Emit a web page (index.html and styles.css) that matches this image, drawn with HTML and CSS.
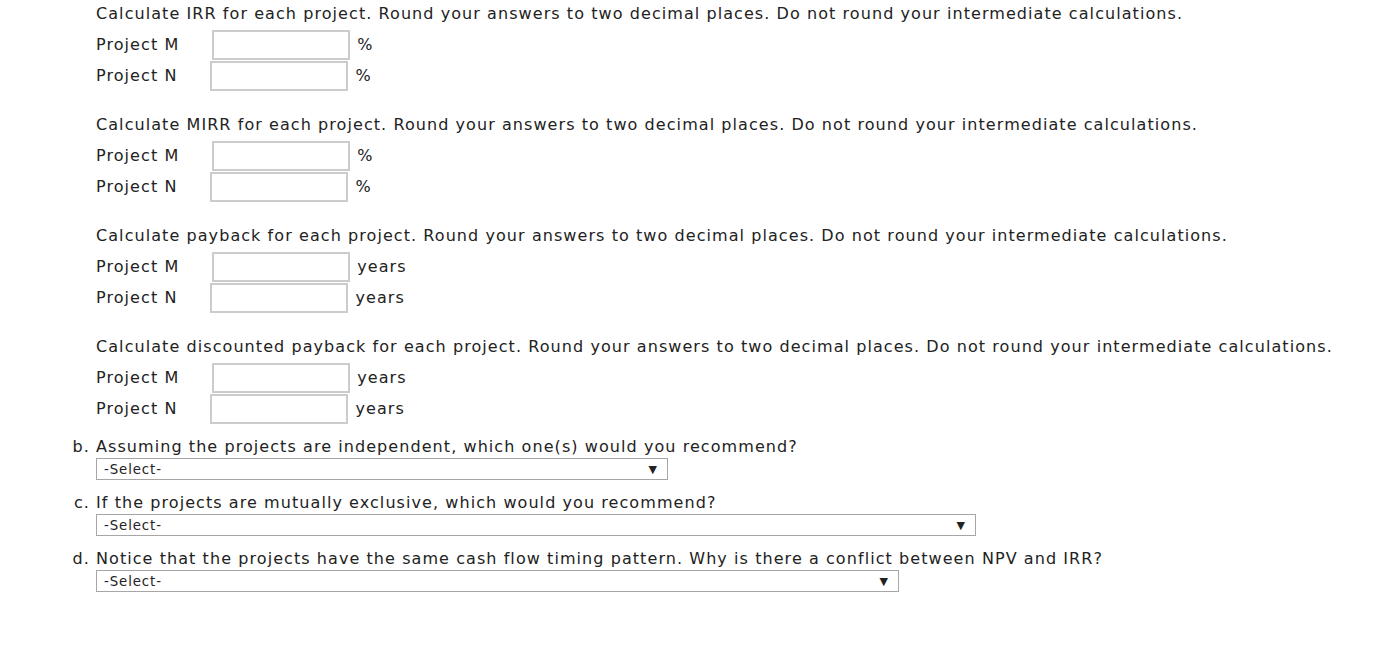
FILE: index.html
```html
<!DOCTYPE html>
<html>
<head>
<meta charset="utf-8">
<link rel="stylesheet" href="styles.css">
</head>
<body>
<div class="page">
  <div class="part">
    <div class="prompt">Calculate IRR for each project. Round your answers to two decimal places. Do not round your intermediate calculations.</div>
    <div class="row"><span class="label">Project M</span><span class="input"></span><span class="unit">%</span></div>
    <div class="row"><span class="label">Project N</span><span class="input"></span><span class="unit">%</span></div>
  </div>
  <div class="part">
    <div class="prompt">Calculate MIRR for each project. Round your answers to two decimal places. Do not round your intermediate calculations.</div>
    <div class="row"><span class="label">Project M</span><span class="input"></span><span class="unit">%</span></div>
    <div class="row"><span class="label">Project N</span><span class="input"></span><span class="unit">%</span></div>
  </div>
  <div class="part">
    <div class="prompt">Calculate payback for each project. Round your answers to two decimal places. Do not round your intermediate calculations.</div>
    <div class="row"><span class="label">Project M</span><span class="input"></span><span class="unit">years</span></div>
    <div class="row"><span class="label">Project N</span><span class="input"></span><span class="unit">years</span></div>
  </div>
  <div class="part last">
    <div class="prompt">Calculate discounted payback for each project. Round your answers to two decimal places. Do not round your intermediate calculations.</div>
    <div class="row"><span class="label">Project M</span><span class="input"></span><span class="unit">years</span></div>
    <div class="row"><span class="label">Project N</span><span class="input"></span><span class="unit">years</span></div>
  </div>
  <div class="item">
    <div class="question"><span class="marker">b.</span>Assuming the projects are independent, which one(s) would you recommend?</div>
    <div class="select sel-b"><span>-Select-</span><span class="arrow">&#9660;</span></div>
  </div>
  <div class="item">
    <div class="question"><span class="marker">c.</span>If the projects are mutually exclusive, which would you recommend?</div>
    <div class="select sel-c"><span>-Select-</span><span class="arrow">&#9660;</span></div>
  </div>
  <div class="item">
    <div class="question"><span class="marker">d.</span>Notice that the projects have the same cash flow timing pattern. Why is there a conflict between NPV and IRR?</div>
    <div class="select sel-d"><span>-Select-</span><span class="arrow">&#9660;</span></div>
  </div>
</div>
</body>
</html>
```

FILE: styles.css
```css
html, body {
  margin: 0;
  background: #fff;
}
body {
  font-family: "DejaVu Sans", Verdana, sans-serif;
  font-size: 16px;
  letter-spacing: 1.07px;
  color: #222;
}
.page {
  padding-top: 1px;
  padding-left: 96px;
  display: flex;
  flex-direction: column;
  align-items: flex-start;
}
.part {
  padding-top: 2px;
  margin-bottom: 21px;
}
.part.last {
  margin-bottom: 12px;
}
.prompt {
  line-height: 22px;
  margin-bottom: 4px;
  white-space: nowrap;
}
.row {
  display: flex;
  align-items: center;
  height: 31px;
}
.label {
  margin-right: 33px;
}
.input {
  display: block;
  width: 134px;
  height: 26px;
  border: 2px solid #ccc;
  background: #fff;
}
.unit {
  margin-left: 7px;
}
.item {
  margin-bottom: 12px;
}
.question {
  position: relative;
  line-height: 22px;
  white-space: nowrap;
}
.marker {
  position: absolute;
  right: 100%;
  margin-right: 6px;
}
.select {
  display: flex;
  justify-content: space-between;
  align-items: center;
  height: 20px;
  border: 1px solid #a6a6a6;
  padding: 0 10px 0 7px;
  font-size: 13.33px;
  letter-spacing: 0.9px;
  color: #222;
  box-sizing: content-box;
}
.arrow {
  font-size: 11px;
  letter-spacing: 0;
}
.sel-b { width: 553px; }
.sel-c { width: 861px; }
.sel-d { width: 784px; }
```
